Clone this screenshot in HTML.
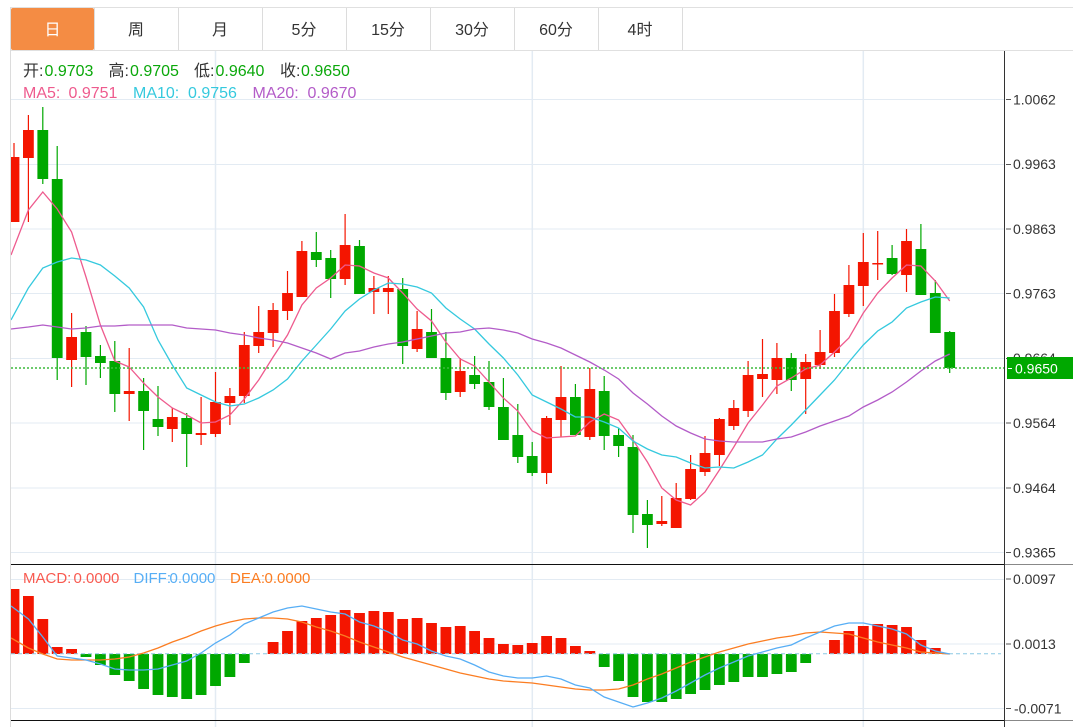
<!DOCTYPE html>
<html lang="zh">
<head>
<meta charset="utf-8">
<title>K线图</title>
<style>
html,body{margin:0;padding:0;background:#fff;width:1073px;height:727px;overflow:hidden}
svg{display:block;font-family:"Liberation Sans","Noto Sans CJK SC",sans-serif}
.tab{font-size:16px;fill:#333;text-anchor:middle}
.ax{font-size:14px;fill:#333}
.t{font-size:16px}
.m{font-size:15px}
</style>
</head>
<body>
<svg width="1073" height="727" viewBox="0 0 1073 727" xmlns="http://www.w3.org/2000/svg">
<defs><clipPath id="c"><rect x="11" y="51" width="993" height="676"/></clipPath></defs>

<!-- tabs -->
<path d="M10 7.5H1073M10 50.5H1073" stroke="#e0e0e0" fill="none"/>
<path d="M10.5 7V727" stroke="#dcdcdc" fill="none"/>
<path d="M94.5 8V50M178.5 8V50M262.5 8V50M346.5 8V50M430.5 8V50M514.5 8V50M598.5 8V50M682.5 8V50" stroke="#dcdcdc" fill="none"/>
<rect x="11" y="8" width="83" height="42" rx="2" fill="#f48c44"/>
<text class="tab" x="52.5" y="35" style="fill:#fff">日</text>
<text class="tab" x="136" y="35">周</text>
<text class="tab" x="220" y="35">月</text>
<text class="tab" x="304" y="35">5分</text>
<text class="tab" x="388" y="35">15分</text>
<text class="tab" x="472" y="35">30分</text>
<text class="tab" x="556" y="35">60分</text>
<text class="tab" x="640" y="35">4时</text>

<!-- grid -->
<path d="M11 99.5H1004M11 164.5H1004M11 229H1004M11 293.5H1004M11 358.5H1004M11 423H1004M11 488H1004M11 552.5H1004M11 579.5H1004M11 644H1004M11 708.5H1004" stroke="#e3ebf3" fill="none"/>
<path d="M215.5 51V727M532.3 51V727M863.3 51V727" stroke="#e3ebf3" stroke-width="1.5" fill="none"/>

<g clip-path="url(#c)">
<!-- red wicks -->
<path fill="none" stroke="#f41500" stroke-width="1.2" d="M14 143V222M28.4 115V222M71.6 313V387M129.2 348V421M172.3 408V442M201.1 397V445M215.5 372V437M229.9 388V425M244.3 332V403M258.7 306V353M273.1 303V347M287.5 271V320M301.9 241V297M345.1 214V285M373.9 276V314M388.3 276V314M417.1 311V352M460.2 358V397M546.6 416V484M561 366V437M589.8 368V440M661.8 496V526M676.2 483V528M690.6 455V500M705 436V476M719.4 418V466M733.8 400V430M748.1 361V417M762.5 339V397M776.9 343V394M805.7 354V414M820.1 330V369M834.5 294V357M848.9 265V317M863.3 233V306M877.7 231V280M906.5 229V292"/>
<!-- green wicks -->
<path fill="none" stroke="#00a800" stroke-width="1.2" d="M42.8 107V184M57.2 146V380M86 326V385M100.4 345V378M114.8 341V412M143.6 378V450M158 386V436M186.7 413V467M316.3 232V267M330.7 250V298M359.5 240V294M402.7 278V364M431.5 309V358M445.9 332V400M474.6 356V389M489 361V410M503.4 378V440M517.8 404V463M532.2 442V476M575.4 384V435M604.2 376V450M618.6 428V457M633 435V533M647.4 500V548M791.3 353V391M892.1 245V275M920.9 224V295M935.3 280V333M949.7 331V373"/>
<!-- red bodies -->
<path fill="#f41500" d="M8.6 157h10.8V222h-10.8zM23 130h10.8V158h-10.8zM66.2 337h10.8V360h-10.8zM123.8 391h10.8V394h-10.8zM166.9 417h10.8V429h-10.8zM195.7 433h10.8V435h-10.8zM210.1 402h10.8V434h-10.8zM224.5 396h10.8V403h-10.8zM238.9 345h10.8V396h-10.8zM253.3 332h10.8V346h-10.8zM267.7 310h10.8V333h-10.8zM282.1 293h10.8V311h-10.8zM296.5 251h10.8V297h-10.8zM339.7 245h10.8V279h-10.8zM368.5 288h10.8V292h-10.8zM382.9 288h10.8V292h-10.8zM411.7 329h10.8V349h-10.8zM454.8 371h10.8V392h-10.8zM541.2 418h10.8V473h-10.8zM555.6 397h10.8V420h-10.8zM584.4 389h10.8V437h-10.8zM656.4 521h10.8V524h-10.8zM670.8 498h10.8V528h-10.8zM685.2 469h10.8V499h-10.8zM699.6 453h10.8V472h-10.8zM714 419h10.8V455h-10.8zM728.4 408h10.8V426h-10.8zM742.7 375h10.8V411h-10.8zM757.1 374h10.8V379h-10.8zM771.5 358h10.8V380h-10.8zM800.3 362h10.8V379h-10.8zM814.7 352h10.8V365h-10.8zM829.1 311h10.8V353h-10.8zM843.5 285h10.8V314h-10.8zM857.9 262h10.8V286h-10.8zM872.3 263h10.8V264.5h-10.8zM901.1 241h10.8V275h-10.8z"/>
<!-- green bodies -->
<path fill="#00a800" d="M37.4 130h10.8V179h-10.8zM51.8 179h10.8V358h-10.8zM80.6 332h10.8V357h-10.8zM95 356h10.8V363h-10.8zM109.4 361h10.8V394h-10.8zM138.2 391h10.8V411h-10.8zM152.6 419h10.8V427h-10.8zM181.3 418h10.8V434h-10.8zM310.9 252h10.8V260h-10.8zM325.3 258h10.8V279h-10.8zM354.1 246h10.8V294h-10.8zM397.3 289h10.8V346h-10.8zM426.1 332h10.8V358h-10.8zM440.5 358h10.8V393h-10.8zM469.2 375h10.8V384h-10.8zM483.6 382h10.8V407h-10.8zM498 407h10.8V440h-10.8zM512.4 435h10.8V457h-10.8zM526.8 456h10.8V473h-10.8zM570 397h10.8V435h-10.8zM598.8 391h10.8V436h-10.8zM613.2 435h10.8V446h-10.8zM627.6 447h10.8V515h-10.8zM642 514h10.8V525h-10.8zM785.9 358h10.8V380h-10.8zM886.7 258h10.8V274h-10.8zM915.5 249h10.8V295h-10.8zM929.9 293h10.8V333h-10.8zM944.3 332h10.8V368h-10.8z"/>

<!-- MA lines -->
<polyline fill="none" stroke="#ee5b8e" stroke-width="1.3" points="11,255 28.4,210 42.8,192 57.2,209 71.6,232 86,277 100.4,325 114.8,361 129.2,367 143.6,383 158,397 172.3,408 186.7,415 201.1,423 215.5,422 229.9,415 244.3,399 258.7,380 273.1,357 287.5,335 301.9,305 316.3,288 330.7,278 345.1,265 359.5,266 373.9,273 388.3,278 402.7,293 417.1,309 431.5,321 445.9,342 460.2,359 474.6,366 489,382 503.4,398 517.8,411 532.2,431 546.6,438 561,437 575.4,436 589.8,422 604.2,414 618.6,420 633,440 647.4,462 661.8,488 676.2,500 690.6,505 705,492 719.4,470 733.8,447 748.1,423 762.5,405 776.9,386 791.3,378 805.7,369 820.1,365 834.5,352 848.9,338 863.3,313 877.7,293 892.1,278 906.5,265 920.9,266 935.3,281 949.7,301"/>
<polyline fill="none" stroke="#35c9de" stroke-width="1.3" points="11,320 28.4,288 42.8,268 57.2,262 71.6,258 86,260 100.4,265 114.8,276 129.2,288 143.6,307 158,340 172.3,365 186.7,388 201.1,395 215.5,402 229.9,406 244.3,404 258.7,398 273.1,390 287.5,379 301.9,361 316.3,345 330.7,329 345.1,311 359.5,299 373.9,290 388.3,283 402.7,284 417.1,287 431.5,293 445.9,308 460.2,319 474.6,329 489,344 503.4,358 517.8,375 532.2,395 546.6,402 561,409 575.4,417 589.8,417 604.2,422 618.6,428 633,441 647.4,449 661.8,455 676.2,457 690.6,463 705,468 719.4,467 733.8,468 748.1,462 762.5,455 776.9,439 791.3,425 805.7,410 820.1,395 834.5,380 848.9,362 863.3,345 877.7,331 892.1,322 906.5,308 920.9,302 935.3,297 949.7,298"/>
<polyline fill="none" stroke="#b35cc8" stroke-width="1.3" points="11,329 28.4,327 42.8,325 57.2,327 71.6,329 86,328 100.4,326 114.8,326 129.2,325 143.6,325 158,325 172.3,325 186.7,328 201.1,329 215.5,330 229.9,333 244.3,335 258.7,338 273.1,340 287.5,343 301.9,348 316.3,353 330.7,359 345.1,353 359.5,351 373.9,347 388.3,344 402.7,342 417.1,339 431.5,336 445.9,333 460.2,332 474.6,329 489,328 503.4,330 517.8,333 532.2,339 546.6,343 561,348 575.4,355 589.8,362 604.2,370 618.6,379 633,393 647.4,404 661.8,416 676.2,426 690.6,433 705,439 719.4,441 733.8,442 748.1,442 762.5,442 776.9,439 791.3,437 805.7,432 820.1,426 834.5,421 848.9,416 863.3,407 877.7,400 892.1,392 906.5,382 920.9,371 935.3,361 949.7,354"/>

<!-- MACD bars -->
<path fill="#f41500" d="M8.6 589h10.8V654h-10.8zM23 596h10.8V654h-10.8zM37.4 619h10.8V654h-10.8zM51.8 647h10.8V654h-10.8zM66.2 649h10.8V654h-10.8zM267.7 642h10.8V654h-10.8zM282.1 631h10.8V654h-10.8zM296.5 621h10.8V654h-10.8zM310.9 618h10.8V654h-10.8zM325.3 615h10.8V654h-10.8zM339.7 610h10.8V654h-10.8zM354.1 613h10.8V654h-10.8zM368.5 611h10.8V654h-10.8zM382.9 612h10.8V654h-10.8zM397.3 619h10.8V654h-10.8zM411.7 618h10.8V654h-10.8zM426.1 623h10.8V654h-10.8zM440.5 627h10.8V654h-10.8zM454.8 626h10.8V654h-10.8zM469.2 631h10.8V654h-10.8zM483.6 638h10.8V654h-10.8zM498 644h10.8V654h-10.8zM512.4 645h10.8V654h-10.8zM526.8 643h10.8V654h-10.8zM541.2 636h10.8V654h-10.8zM555.6 638h10.8V654h-10.8zM570 646h10.8V654h-10.8zM584.4 651h10.8V654h-10.8zM829.1 640h10.8V654h-10.8zM843.5 631h10.8V654h-10.8zM857.9 626h10.8V654h-10.8zM872.3 624h10.8V654h-10.8zM886.7 625h10.8V654h-10.8zM901.1 627h10.8V654h-10.8zM915.5 640h10.8V654h-10.8zM929.9 648h10.8V654h-10.8z"/>
<path fill="#00a800" d="M80.6 654h10.8V657h-10.8zM95 654h10.8V665h-10.8zM109.4 654h10.8V675h-10.8zM123.8 654h10.8V681h-10.8zM138.2 654h10.8V689h-10.8zM152.6 654h10.8V695h-10.8zM166.9 654h10.8V697h-10.8zM181.3 654h10.8V699h-10.8zM195.7 654h10.8V695h-10.8zM210.1 654h10.8V686h-10.8zM224.5 654h10.8V677h-10.8zM238.9 654h10.8V663h-10.8zM598.8 654h10.8V667h-10.8zM613.2 654h10.8V681h-10.8zM627.6 654h10.8V697h-10.8zM642 654h10.8V702h-10.8zM656.4 654h10.8V702h-10.8zM670.8 654h10.8V699h-10.8zM685.2 654h10.8V694h-10.8zM699.6 654h10.8V690h-10.8zM714 654h10.8V685h-10.8zM728.4 654h10.8V682h-10.8zM742.7 654h10.8V677h-10.8zM757.1 654h10.8V677h-10.8zM771.5 654h10.8V674h-10.8zM785.9 654h10.8V672h-10.8zM800.3 654h10.8V663h-10.8z"/>
<path d="M11 653.7H1001" stroke="#8cc8e4" stroke-width="1" stroke-dasharray="4 3" fill="none"/>

<polyline fill="none" stroke="#fb7d22" stroke-width="1.3" points="11,638 28.4,648 42.8,654 57.2,659 71.6,660 86,660 100.4,660 114.8,659 129.2,657 143.6,653 158,648 172.3,642 186.7,637 201.1,631 215.5,626 229.9,622 244.3,619 258.7,618 273.1,618 287.5,619 301.9,622 316.3,627 330.7,631 345.1,636 359.5,642 373.9,647 388.3,652 402.7,657 417.1,661 431.5,665 445.9,669 460.2,673 474.6,676 489,679 503.4,681 517.8,682 532.2,683 546.6,685 561,687 575.4,689 589.8,690 604.2,690 618.6,689 633,685 647.4,679 661.8,674 676.2,668 690.6,662 705,657 719.4,652 733.8,648 748.1,644 762.5,641 776.9,638 791.3,636 805.7,633 820.1,632 834.5,633 848.9,634 863.3,638 877.7,642 892.1,645 906.5,648 920.9,652 935.3,653 949.7,654"/>
<polyline fill="none" stroke="#57aef5" stroke-width="1.3" points="11,606 28.4,619 42.8,637 57.2,656 71.6,658 86,660 100.4,664 114.8,669 129.2,670 143.6,670 158,669 172.3,665 186.7,661 201.1,653 215.5,643 229.9,635 244.3,624 258.7,618 273.1,612 287.5,608 301.9,606 316.3,609 330.7,612 345.1,614 359.5,622 373.9,626 388.3,632 402.7,640 417.1,644 431.5,651 445.9,656 460.2,659 474.6,665 489,672 503.4,676 517.8,678 532.2,678 546.6,676 561,679 575.4,685 589.8,688 604.2,697 618.6,702 633,707 647.4,703 661.8,698 676.2,691 690.6,683 705,675 719.4,668 733.8,662 748.1,656 762.5,652 776.9,648 791.3,645 805.7,638 820.1,632 834.5,626 848.9,623 863.3,623 877.7,626 892.1,629 906.5,634 920.9,645 935.3,651 949.7,654"/>

<!-- last price dotted line -->
<path d="M11 368H1004" stroke="#3cba3c" stroke-width="1.5" stroke-dasharray="2 2" fill="none"/>
</g>

<!-- info text -->
<g class="t">
<text x="23" y="76" fill="#333">开:</text><text x="44.5" y="76" fill="#0aa80a">0.9703</text>
<text x="108.5" y="76" fill="#333">高:</text><text x="130" y="76" fill="#0aa80a">0.9705</text>
<text x="194" y="76" fill="#333">低:</text><text x="215.5" y="76" fill="#0aa80a">0.9640</text>
<text x="280" y="76" fill="#333">收:</text><text x="301" y="76" fill="#0aa80a">0.9650</text>
<text x="23" y="98" fill="#ee5b8e">MA5:</text><text x="68.5" y="98" fill="#ee5b8e">0.9751</text>
<text x="133" y="98" fill="#35c9de">MA10:</text><text x="188" y="98" fill="#35c9de">0.9756</text>
<text x="252.5" y="98" fill="#b35cc8">MA20:</text><text x="307.5" y="98" fill="#b35cc8">0.9670</text>
</g>
<g class="m">
<text x="23" y="583" fill="#f85a50">MACD:</text><text x="73.5" y="583" fill="#f85a50">0.0000</text>
<text x="133.5" y="583" fill="#57aef5">DIFF:</text><text x="169.5" y="583" fill="#57aef5">0.0000</text>
<text x="230" y="583" fill="#fb7d22">DEA:</text><text x="264.5" y="583" fill="#fb7d22">0.0000</text>
</g>

<!-- panel lines and axis -->
<path d="M11 564.5H1004M11 720.5H1004" stroke="#111" fill="none"/>
<path d="M1004 564.5H1073M1004 720.5H1073" stroke="#888" fill="none"/>
<path d="M1004.5 51V727" stroke="#333" fill="none"/>
<path d="M1006 99.5h5M1006 164.5h5M1006 229h5M1006 293.5h5M1006 358.5h5M1006 423h5M1006 488h5M1006 552.5h5M1006 579h5M1006 644h5M1006 708.5h5" stroke="#555" fill="none"/>
<g class="ax">
<text x="1013" y="104.5">1.0062</text>
<text x="1013" y="169">0.9963</text>
<text x="1013" y="234">0.9863</text>
<text x="1013" y="298.5">0.9763</text>
<text x="1013" y="363">0.9664</text>
<text x="1013" y="428">0.9564</text>
<text x="1013" y="493">0.9464</text>
<text x="1013" y="557.5">0.9365</text>
<text x="1013" y="584">0.0097</text>
<text x="1013" y="649">0.0013</text>
<text x="1014" y="713.5">-0.0071</text>
</g>

<!-- last price label -->
<rect x="1007" y="357" width="66" height="22" fill="#00a800"/>
<path d="M1008 368.5h4" stroke="#fff" fill="none"/>
<text x="1015" y="373.5" style="font-size:14px" fill="#fff">0.9650</text>
</svg>
</body>
</html>
